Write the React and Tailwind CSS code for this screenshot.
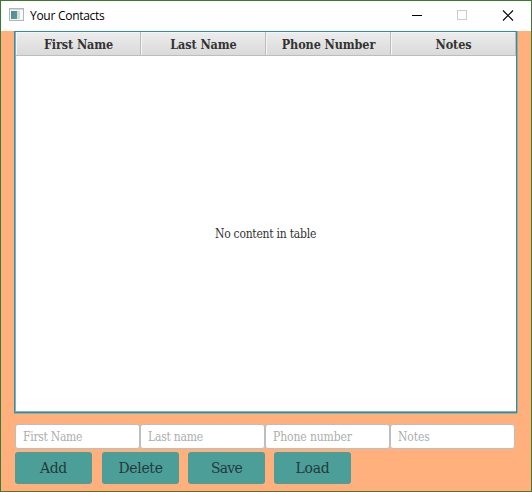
const serif = "font-['DejaVu_Serif_Condensed','DejaVu_Serif',serif]";

const columns = ['First Name', 'Last Name', 'Phone Number', 'Notes'];

const fields = [
  { label: 'First Name', style: 'placeholder:tracking-[-0.28px]' },
  { label: 'Last name', style: 'placeholder:tracking-[-0.22px]' },
  { label: 'Phone number', style: 'placeholder:tracking-[-0.1px]' },
  { label: 'Notes', style: 'placeholder:tracking-[-0.1px]' },
];

const buttons = [
  { label: 'Add', style: 'tracking-[-0.35px]' },
  { label: 'Delete', style: 'ml-[10px] tracking-[-0.3px]' },
  { label: 'Save', style: 'ml-[9px] tracking-[-0.7px]' },
  { label: 'Load', style: 'ml-[9px] tracking-[-0.2px]' },
];

function AppIcon() {
  return (
    <svg width="16" height="14" viewBox="0 0 16 14" className="ml-2 shrink-0 -translate-y-px" shapeRendering="crispEdges">
      <defs>
        <linearGradient id="pane" x1="0" y1="0" x2="1" y2="1">
          <stop offset="0" stopColor="#5b7fa8" />
          <stop offset="1" stopColor="#4fa87f" />
        </linearGradient>
      </defs>
      <rect x="0.5" y="0.5" width="14" height="12" fill="#f4f5f5" stroke="#b0b6b9" />
      <rect x="1" y="1" width="13" height="1" fill="#d5dadd" />
      <rect x="2" y="3" width="6" height="8" fill="url(#pane)" />
      <rect x="8" y="3" width="3" height="8" fill="#d3dcdc" />
      <rect x="11" y="3" width="3" height="8" fill="#fafafa" />
    </svg>
  );
}

function TitleBar() {
  return (
    <header className="flex h-[30px] items-center bg-white">
      <AppIcon />
      <h1 className="ml-[5px] flex-1 whitespace-nowrap font-['Open_Sans','Noto_Sans',sans-serif] text-[12px] leading-4 tracking-[-0.28px] text-black">
        Your Contacts
      </h1>
      <svg width="120" height="30" viewBox="0 0 120 30" fill="none" className="shrink-0">
        <path d="M1 14.5h10" stroke="#000" />
        <rect x="46.5" y="9.5" width="9" height="9" stroke="#ccc" />
        <path d="M92 9.5l10 10M102 9.5l-10 10" stroke="#000" strokeWidth="1.1" />
      </svg>
    </header>
  );
}

export default function App() {
  return (
    <div className={`flex h-[492px] w-[532px] flex-col overflow-hidden border border-[#3c7a32] border-b-[#5a7029] bg-[#ffb07c] ${serif}`}>
      <TitleBar />
      <main className="flex flex-col pl-[14px]">
        <section className="-ml-px flex h-[382px] w-[503px] flex-col border border-[#2e8fa5] bg-white shadow-[inset_1px_0_0_#7fb4bf,inset_0_-1px_0_#7fb4bf,1px_0_0_#a0a898,0_1px_0_#a0a898]">
          <div className="ml-px flex h-[24px] w-[500px] border-b border-[#bdbdbd] bg-linear-to-b from-[#ededed] to-[#dadada]">
            {columns.map((label) => (
              <div key={label} className="flex w-[125px] items-center justify-center border-r border-[#bcbcbc] pl-px shadow-[inset_1px_1px_0_#f5f5f5]">
                <span className="whitespace-nowrap pt-[2px] text-[12.5px] leading-4 font-bold tracking-[-0.1px] text-[#333]">{label}</span>
              </div>
            ))}
          </div>
          <p className="flex flex-1 items-center justify-center text-[12px] tracking-[-0.24px] text-[#333]">No content in table</p>
        </section>
        <div className="mt-[11px] flex">
          {fields.map((f) => (
            <input
              key={f.label}
              placeholder={f.label}
              className={`h-[25px] w-[125px] rounded-[3px] border border-[#bebebe] bg-white px-[7px] text-[12px] outline-none placeholder:text-[#adadad] ${f.style}`}
            />
          ))}
        </div>
        <div className="mt-[3px] flex">
          {buttons.map((b) => (
            <button key={b.label} className={`h-[32px] w-[77px] rounded-[3px] bg-[#4b9f98] pt-px text-[15.5px] text-[#26393a] ${b.style}`}>
              {b.label}
            </button>
          ))}
        </div>
      </main>
    </div>
  );
}
